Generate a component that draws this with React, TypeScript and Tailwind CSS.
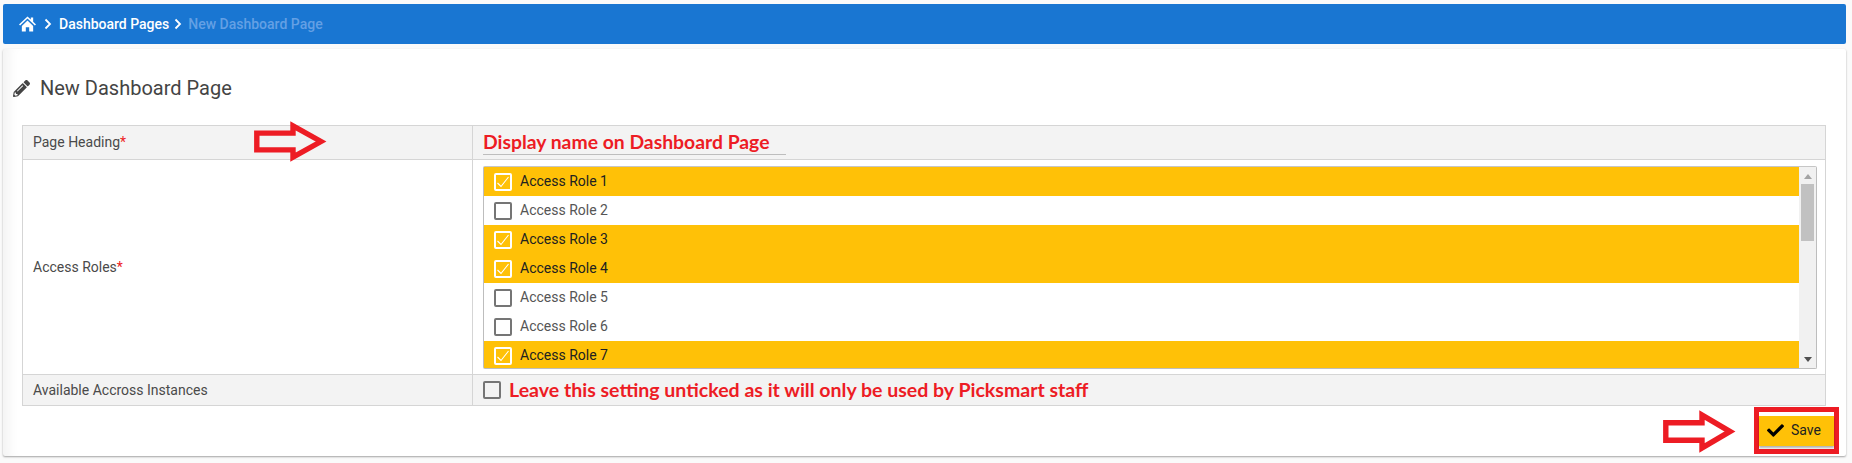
import { FaCheck, FaPencilAlt } from "react-icons/fa";

const roles = [
  { n: 1, on: true },
  { n: 2, on: false },
  { n: 3, on: true },
  { n: 4, on: true },
  { n: 5, on: false },
  { n: 6, on: false },
  { n: 7, on: true },
];

function Chevron() {
  return (
    <svg width="8" height="12" viewBox="0 0 8 12" className="shrink-0">
      <path d="M1.5 1.5 6 6l-4.5 4.5" fill="none" stroke="#fff" strokeWidth="1.8" />
    </svg>
  );
}

function Home() {
  return (
    <svg width="17" height="16" viewBox="0 0 18 16" className="shrink-0" fill="#fff">
      <path d="M9 0 0 8.5l1.2 1.2L9 2.3l7.8 7.4L18 8.5l-3-2.9V1h-2.5v2.2Z" />
      <path d="M3 10 9 4.3l6 5.7v6h-4.2v-4.5H7.2V16H3Z" />
    </svg>
  );
}

function Box({ on }: { on: boolean }) {
  return (
    <span
      className={`flex h-[18px] w-[18px] shrink-0 items-center justify-center rounded-[2px] border-2 ${
        on ? "border-white" : "border-[#757575]"
      }`}
    >
      {on && (
        <svg width="14" height="14" viewBox="0 0 14 14">
          <path d="M1.5 8 5 11.5 12.5 2" fill="none" stroke="#fff" strokeWidth="1.1" />
        </svg>
      )}
    </span>
  );
}

function Arrow({ className }: { className: string }) {
  return (
    <svg viewBox="0 0 73 42" preserveAspectRatio="none" className={className}>
      <path
        d="M2.8 12.5H39V5L67 21 39 37V29.5H2.8Z"
        fill="none"
        stroke="#ed1c24"
        strokeWidth="5.4"
        strokeLinejoin="miter"
      />
    </svg>
  );
}

function Req() {
  return <span className="text-[#ed1c24]">*</span>;
}

export default function App() {
  return (
    <div className="relative h-[463px] w-[1852px] overflow-hidden bg-[#fafafa] px-[3px] pt-1 font-['Roboto',sans-serif] text-[14px] text-[#4a4a4a]">
      <nav className="flex h-10 w-[1843px] items-center rounded-[2px] bg-[#1976d2] pl-4 text-white">
        <span className="mr-[8px]"><Home /></span>
        <Chevron />
        <span className="ml-[7px] font-medium">Dashboard Pages</span>
        <span className="ml-[5px]"><Chevron /></span>
        <span className="ml-[6px] font-medium text-[#64a0e4]">New Dashboard Page</span>
      </nav>

      <main className="mt-[5px] h-[407px] w-[1843px] rounded-[2px] bg-white pl-[19px] pr-5 shadow-[0_1px_2px_rgba(0,0,0,0.35),inset_14px_0_12px_-8px_rgba(0,0,0,0.05)]">
        <h1 className="-ml-[9px] flex h-[76px] items-center pt-[2px] text-[20px] font-normal text-[#444]">
          <FaPencilAlt className="mr-[10px] h-[17px] w-[17px]" />
          New Dashboard Page
        </h1>

        <div className="w-[1804px] border border-[#d5d5d5]">
          <div className="flex h-[33px] bg-[#f3f3f3]">
            <div className="flex w-[450px] items-center border-r border-[#d5d5d5] pl-[10px]">
              Page Heading<Req />
            </div>
            <div className="flex flex-1 items-center pl-[10px]">
              <span className="border-b border-[#bdbdbd] pr-4 font-['Lato',sans-serif] text-[19.35px] leading-[24px] font-bold text-[#ed1c24]">
                Display name on Dashboard Page
              </span>
            </div>
          </div>

          <div className="flex h-[215px] border-t border-[#d5d5d5]">
            <div className="flex w-[450px] items-center border-r border-[#d5d5d5] pl-[10px]">
              Access Roles<Req />
            </div>
            <div className="flex flex-1 items-start py-[6px] pl-[10px] pr-[8px]">
              <div className="flex h-[203px] w-full rounded-[2px] border border-[#bdbdbd] border-t-[#c6c6c6]">
                <div className="flex-1 overflow-hidden">
                  {roles.map((r) => (
                    <div
                      key={r.n}
                      className={`flex h-[29px] items-center pl-[10px] ${
                        r.on ? "bg-[#ffc107] text-[#212121]" : "bg-white text-[#555]"
                      }`}
                    >
                      <Box on={r.on} />
                      <span className="ml-[8px]">Access Role {r.n}</span>
                    </div>
                  ))}
                </div>
                <div className="flex w-[17px] flex-col items-center bg-[#f1f1f1]">
                  <svg width="8" height="5" viewBox="0 0 8 5" className="mt-[7px]">
                    <path d="M4 0 8 5H0Z" fill="#a3a3a3" />
                  </svg>
                  <div className="mt-[5px] h-[57px] w-[13px] bg-[#c1c1c1]" />
                  <svg width="8" height="5" viewBox="0 0 8 5" className="mt-auto mb-[6px]">
                    <path d="M0 0H8L4 5Z" fill="#505050" />
                  </svg>
                </div>
              </div>
            </div>
          </div>

          <div className="flex h-[31px] border-t border-[#d5d5d5] bg-[#f3f3f3]">
            <div className="flex w-[450px] items-center border-r border-[#d5d5d5] pl-[10px]">
              Available Accross Instances
            </div>
            <div className="flex flex-1 items-center pl-[10px]">
              <Box on={false} />
              <span className="ml-[8px] font-['Lato',sans-serif] text-[19.55px] font-bold text-[#ed1c24]">
                Leave this setting unticked as it will only be used by Picksmart staff
              </span>
            </div>
          </div>
        </div>
      </main>

      <Arrow className="absolute left-[254px] top-[121px] h-[41px] w-[73px]" />
      <Arrow className="absolute left-[1663px] top-[410px] h-[43px] w-[73px]" />

      <div className="absolute left-[1754px] top-[407px] flex h-[47px] w-[85px] items-center border-[5px] border-[#ed1c24] bg-white">
        <button className="flex h-[30px] w-full items-center bg-[#ffc107] pl-[8px] text-[14px] text-[#212121] shadow-[0_2px_2px_rgba(0,0,0,0.3)]">
          <FaCheck className="mr-[7px] h-[17px] w-[17px] text-black" />
          Save
        </button>
      </div>
    </div>
  );
}
